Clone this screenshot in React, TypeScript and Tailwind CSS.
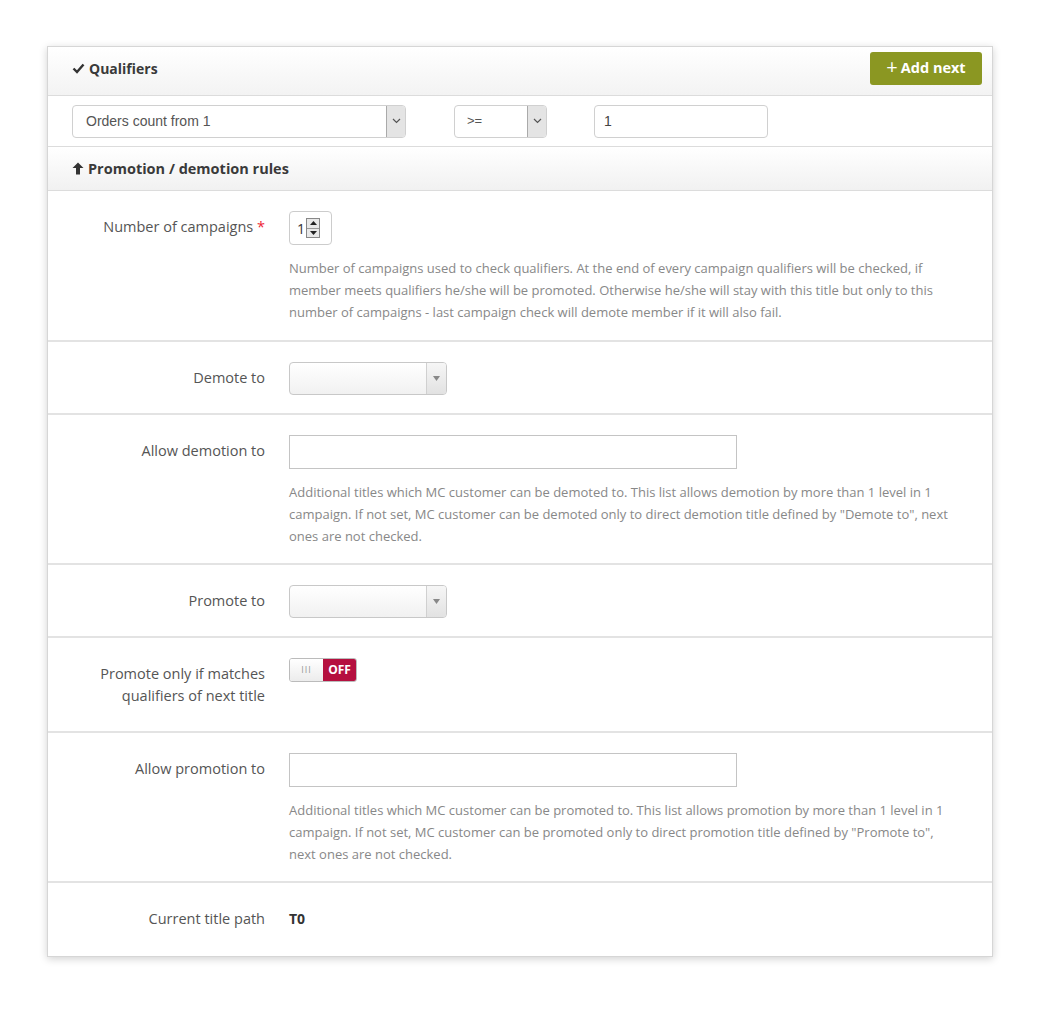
import React from "react";

const label = "text-[14.5px] text-[#555] text-right leading-[22px]";
const help = "text-[13px] text-[#888] leading-[22px] mt-[12px] pr-[44px]";

function Chevron() {
  return (
    <svg width="9" height="6" viewBox="0 0 9 6">
      <path d="M1 1 L4.5 4.5 L8 1" fill="none" stroke="#555" strokeWidth="1.2" />
    </svg>
  );
}

function Select2() {
  return (
    <div className="flex w-[158px] h-[33px] rounded-[4px] border border-[#c8c8c8] bg-gradient-to-b from-white to-[#f1f1f1] overflow-hidden">
      <div className="flex-1" />
      <div className="w-[20px] border-l border-[#d0d0d0] bg-gradient-to-b from-[#f6f6f6] to-[#e2e2e2] flex items-center justify-center">
        <svg width="7" height="5" viewBox="0 0 7 5">
          <path d="M0 0 L7 0 L3.5 5 Z" fill="#888" />
        </svg>
      </div>
    </div>
  );
}

function Row({
  title,
  children,
  h,
}: {
  title: React.ReactNode;
  children: React.ReactNode;
  h?: string;
}) {
  return (
    <div className={`flex border-t-2 border-[#e3e3e3] pt-[20px] ${h ?? ""}`}>
      <div className={`w-[217px] shrink-0 ${label}`}>{title}</div>
      <div className="ml-[24px] flex-1">{children}</div>
    </div>
  );
}

export default function App() {
  return (
    <div
      className="w-[1053px] h-[1012px] bg-white pt-[46px] pl-[47px]"
      style={{ fontFamily: '"Open Sans", "Liberation Sans", sans-serif' }}
    >
      <div className="w-[946px] border border-[#d6d6d6] bg-white shadow-[0_2px_8px_rgba(0,0,0,0.18)]">
        {/* Header 1 */}
        <div className="h-[49px] flex items-center justify-between pl-[24px] pr-[10px] pb-[6px] bg-gradient-to-b from-white to-[#f3f3f3] border-b border-[#dcdcdc]">
          <div className="flex items-center gap-[4px] text-[14px] font-bold text-[#3a3a3a]">
            <svg width="13" height="11" viewBox="0 0 13 11">
              <path d="M1.5 5.5 L5 9 L11.5 1.5" fill="none" stroke="#333" strokeWidth="2.4" />
            </svg>
            Qualifiers
          </div>
          <button className="h-[33px] w-[112px] rounded-[3px] bg-[#8b9722] text-white text-[14.5px] font-bold flex items-center justify-center gap-[3px]">
            <span className="text-[20px] leading-none font-normal -mt-[2px]">+</span>Add next
          </button>
        </div>
        {/* Qualifier row */}
        <div
          className="h-[51px] flex items-center pl-[24px] border-b border-[#dcdcdc]"
          style={{ fontFamily: '"Liberation Sans", Arial, sans-serif' }}
        >
          <div className="flex w-[334px] h-[33px] rounded-[4px] border border-[#d0d0d0] overflow-hidden">
            <div className="flex-1 pl-[13px] flex items-center text-[14px] text-[#555]">Orders count from 1</div>
            <div className="w-[19px] border-l border-[#aaa] bg-[#e4e4e4] flex items-center justify-center">
              <Chevron />
            </div>
          </div>
          <div className="ml-[48px] flex w-[93px] h-[33px] rounded-[4px] border border-[#d0d0d0] overflow-hidden">
            <div className="flex-1 pl-[12px] flex items-center text-[13px] text-[#555]">&gt;=</div>
            <div className="w-[19px] border-l border-[#aaa] bg-[#e4e4e4] flex items-center justify-center">
              <Chevron />
            </div>
          </div>
          <div className="ml-[47px] w-[174px] h-[33px] rounded-[4px] border border-[#d0d0d0] pl-[9px] flex items-center text-[14px] text-[#444]">
            1
          </div>
        </div>
        {/* Header 2 */}
        <div className="h-[44px] flex items-center pl-[24px] gap-[4px] text-[14.5px] font-bold text-[#3a3a3a] bg-gradient-to-b from-white to-[#f1f1f1] border-b border-[#dcdcdc]">
          <svg width="12" height="13" viewBox="0 0 12 13">
            <path d="M6 0.5 L11.5 6 L8 6 L8 12.5 L4 12.5 L4 6 L0.5 6 Z" fill="#333" />
          </svg>
          Promotion / demotion rules
        </div>
        {/* Number of campaigns */}
        <div className="flex pt-[20px] h-[149px]">
          <div className={`w-[217px] shrink-0 ${label} pt-[5px]`}>
            Number of campaigns <span className="text-[#e23]">*</span>
          </div>
          <div className="ml-[24px] flex-1">
            <div className="w-[43px] h-[34px] rounded-[4px] border border-[#ccc] flex items-center pl-[7px] text-[14px] text-[#333]">
              1
              <div className="ml-[1px] w-[14px] h-[20px] border border-[#888] bg-[#e8e8e8] flex flex-col">
                <div className="flex-1 flex items-center justify-center border-b border-[#999]">
                  <svg width="7" height="4" viewBox="0 0 7 4"><path d="M0 4 L3.5 0 L7 4 Z" fill="#222" /></svg>
                </div>
                <div className="flex-1 flex items-center justify-center">
                  <svg width="7" height="4" viewBox="0 0 7 4"><path d="M0 0 L3.5 4 L7 0 Z" fill="#222" /></svg>
                </div>
              </div>
            </div>
            <div className={help}>
              Number of campaigns used to check qualifiers. At the end of every campaign qualifiers will be checked, if member meets qualifiers he/she will be promoted. Otherwise he/she will stay with this title but only to this number of campaigns - last campaign check will demote member if it will also fail.
            </div>
          </div>
        </div>
        <Row title={<div className="pt-[5px]">Demote to</div>} h="h-[73px]">
          <Select2 />
        </Row>
        <Row title={<div className="pt-[5px]">Allow demotion to</div>} h="h-[150px]">
          <div className="w-[448px] h-[34px] border border-[#c4c4c4]" />
          <div className={help}>
            Additional titles which MC customer can be demoted to. This list allows demotion by more than 1 level in 1 campaign. If not set, MC customer can be demoted only to direct demotion title defined by "Demote to", next ones are not checked.
          </div>
        </Row>
        <Row title={<div className="pt-[5px]">Promote to</div>} h="h-[73px]">
          <Select2 />
        </Row>
        <Row
          title={
            <div className="pt-[5px]">
              Promote only if matches
              <br />
              qualifiers of next title
            </div>
          }
          h="h-[95px]"
        >
          <div className="flex w-[68px] h-[24px] rounded-[3px] border border-[#bbb] overflow-hidden">
            <div className="w-[33px] bg-gradient-to-b from-white to-[#ececec] flex items-center justify-center text-[9px] text-[#999] tracking-[1px]">
              III
            </div>
            <div className="flex-1 bg-[#b5103f] text-white text-[12px] font-bold flex items-center justify-center">
              OFF
            </div>
          </div>
        </Row>
        <Row title={<div className="pt-[5px]">Allow promotion to</div>} h="h-[150px]">
          <div className="w-[448px] h-[34px] border border-[#c4c4c4]" />
          <div className={help}>
            Additional titles which MC customer can be promoted to. This list allows promotion by more than 1 level in 1 campaign. If not set, MC customer can be promoted only to direct promotion title defined by "Promote to", next ones are not checked.
          </div>
        </Row>
        <Row title={<div className="pt-[5px]">Current title path</div>} h="h-[75px]">
          <div className="pt-[5px] text-[14px] font-bold text-[#333] leading-[22px]">T0</div>
        </Row>
      </div>
    </div>
  );
}
